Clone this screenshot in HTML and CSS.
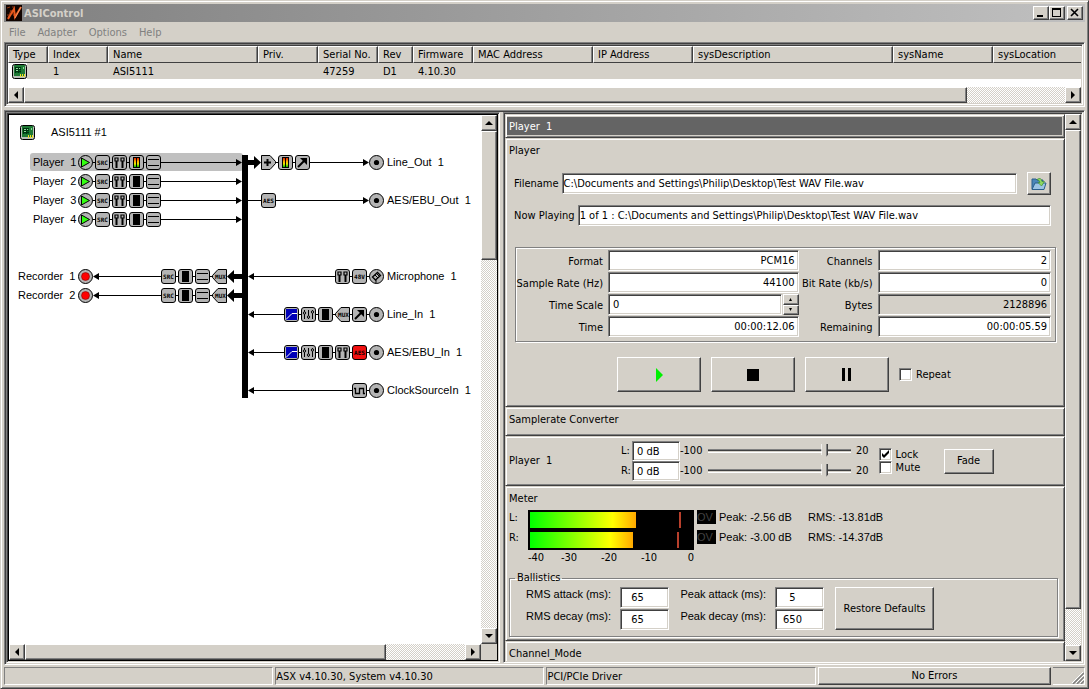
FILE: index.html
```
<!DOCTYPE html>
<html lang="en">
<head>
<meta charset="utf-8">
<title>ASIControl</title>
<link rel="stylesheet" href="styles.css">
</head>
<body>
<svg class="defs" width="0" height="0" aria-hidden="true">
  <defs>
    <linearGradient id="level" x1="0" y1="0" x2="0" y2="1">
      <stop offset="0" stop-color="#e02000"/><stop offset=".4" stop-color="#ffb000"/>
      <stop offset=".65" stop-color="#e8e800"/><stop offset="1" stop-color="#00c000"/>
    </linearGradient>
    <symbol id="card" viewBox="0 0 15 15">
      <rect x=".5" y=".5" width="14" height="14" rx="2" fill="#b8c0b8" stroke="#000"/>
      <rect x="2" y="1" width="11" height="11" fill="#1f7a35"/>
      <path d="M3 3h6v6H3z" fill="#062"/><path d="M3 3.5h6M3 5.5h6M3 7.500h6M3.500 3v6M6.500 3v6" stroke="#031"/>
      <path d="M4 4h2v1H4zM7 4h1v1H7zM4 6h2v1H4zM11 3h1v2h-1z" fill="#8fdc9a"/>
      <path d="M8 10h1v3H8zM10 10h1v3h-1zM12 10h1v3h-1z" fill="#f0e020"/>
    </symbol>
    <symbol id="box" viewBox="0 0 15 15"><rect x=".5" y=".5" width="14" height="14" rx="2.500" fill="#b4b4b4" stroke="#000"/></symbol>
    <symbol id="disc" viewBox="0 0 15 15"><circle cx="7.500" cy="7.500" r="7" fill="#b4b4b4" stroke="#000"/></symbol>
    <symbol id="play" viewBox="0 0 15 15"><use href="#disc"/><path d="M3.500 3v9L11.500 7.500z" fill="#3f1" stroke="#000"/></symbol>
    <symbol id="rec" viewBox="0 0 15 15"><use href="#disc"/><circle cx="7.500" cy="7.500" r="4" fill="#f00" stroke="#600" stroke-width=".5"/></symbol>
    <symbol id="jack" viewBox="0 0 15 15"><use href="#disc"/><circle cx="7.500" cy="7.500" r="2.600"/></symbol>
    <symbol id="mic" viewBox="0 0 15 15"><use href="#disc"/><path d="M3.500 8l5-4.500 3 3-5 4.500z" fill="#b4b4b4" stroke="#000" stroke-width="1.300"/><path d="M6 6l3 3M7 11v3.500M8 5l2.500 2.500" stroke="#000"/></symbol>
    <symbol id="src" viewBox="0 0 15 15"><use href="#box"/><text class="tiny" x="7.500" y="10">SRC</text></symbol>
    <symbol id="aes" viewBox="0 0 15 15"><use href="#box"/><text class="tiny" x="7.500" y="10">AES</text></symbol>
    <symbol id="aesred" viewBox="0 0 15 15"><rect x=".5" y=".5" width="14" height="14" rx="2.500" fill="#f01010" stroke="#000"/><text class="tiny" x="7.500" y="10">AES</text></symbol>
    <symbol id="phantom" viewBox="0 0 15 15"><use href="#box"/><text class="tiny" x="7.500" y="10">48V</text></symbol>
    <symbol id="mux" viewBox="0 0 15 15"><path d="M6 .5h8.500v14H6L.5 8.500v-2z" fill="#b4b4b4" stroke="#000"/><text class="tiny" x="8.500" y="10">MUX</text></symbol>
    <symbol id="fader" viewBox="0 0 15 15"><use href="#box"/><path d="M4.500 5v8M10.500 5v8" stroke="#000" stroke-width="2"/><path d="M3 3h3v3H3zM9 3h3v3H9z" fill="#b4b4b4" stroke="#000" stroke-width="1.200"/></symbol>
    <symbol id="eq" viewBox="0 0 15 15"><use href="#box"/><path d="M3.500 3v9M7.500 3v9M11.500 3v9" stroke="#000"/><g fill="#b4b4b4" stroke="#000"><circle cx="3.500" cy="6" r="1.200"/><circle cx="7.500" cy="10" r="1.200"/><circle cx="11.500" cy="5" r="1.200"/></g></symbol>
    <symbol id="meteroff" viewBox="0 0 15 15"><use href="#box"/><path d="M4 2h7v11H4z"/></symbol>
    <symbol id="meteron" viewBox="0 0 15 15"><use href="#box"/><path d="M4 2h7v11H4z"/><path d="M5 3h2v9H5zM8 3h2v9H8z" fill="url(#level)"/></symbol>
    <symbol id="mode" viewBox="0 0 15 15"><use href="#box"/><path d="M2 4.500h11M2 10.500h11" stroke="#000"/></symbol>
    <symbol id="plus" viewBox="0 0 15 15"><path d="M.5.5H9L14.500 6.500v2L9 14.500H.5z" fill="#b4b4b4" stroke="#000"/><path d="M3 7.500h7M6.500 4v7" stroke="#000" stroke-width="2"/></symbol>
    <symbol id="trim" viewBox="0 0 15 15"><use href="#box"/><path d="M3 12l7-7" stroke="#000" stroke-width="2"/><path d="M5 3h7v7z"/></symbol>
    <symbol id="curve" viewBox="0 0 15 15"><rect x=".5" y=".5" width="14" height="14" rx="2.500" fill="#b4b4b4" stroke="#000"/><path d="M2 2h11v11H2z" fill="#0000b8"/><path d="M2 12.500l6-6h5" fill="none" stroke="#fff"/></symbol>
    <symbol id="wave" viewBox="0 0 15 15"><use href="#box"/><path d="M2 5.500h1.500v5h4v-5h4v5H13" fill="none" stroke="#000" stroke-width="1.300"/></symbol>
  </defs>
</svg>

<div class="window">
  <header class="titlebar">
    <svg class="logo" width="16" height="16" viewBox="0 0 16 16" aria-hidden="true">
      <rect width="16" height="16" fill="#100400"/><path d="M1 3l3-1M6 2h3M2 13l3-8 3 6M1 10l3 0" stroke="#8a3410" fill="none"/>
      <path d="M2 14L8 4l1 8 6-10" fill="none" stroke="#e8581c" stroke-width="2"/>
      <path d="M9 13l6-11" stroke="#ffb080" stroke-width=".7"/>
    </svg>
    <h1>ASIControl</h1>
    <div class="caption">
      <button class="raised" aria-label="Minimize"><svg width="12" height="10"><path d="M2 7h6v2H2z"/></svg></button>
      <button class="raised" aria-label="Maximize"><svg width="12" height="10"><path d="M1 0h9v9H1zM2 2v6h7V2z" fill-rule="evenodd"/></svg></button>
      <button class="raised close" aria-label="Close"><svg width="12" height="10"><path d="M2 1l7 7M9 1L2 8" stroke="#000" stroke-width="1.600"/></svg></button>
    </div>
  </header>

  <nav class="menu">
    <button>File</button><button>Adapter</button><button>Options</button><button>Help</button>
  </nav>

  <section class="sunk"><div class="sunk adapters">
    <div class="rows">
      <table>
        <colgroup><col class="w40"><col class="w60"><col class="w150"><col class="w60"><col class="w60"><col class="w35"><col class="w60"><col class="w120"><col class="w100"><col class="w200"><col class="w100"><col class="w150"></colgroup>
        <thead><tr><th>Type</th><th>Index</th><th>Name</th><th>Priv.</th><th>Serial No.</th><th>Rev</th><th>Firmware</th><th>MAC Address</th><th>IP Address</th><th>sysDescription</th><th>sysName</th><th>sysLocation</th></tr></thead>
        <tbody><tr><td class="type"><svg width="15" height="15"><use href="#card"/></svg></td><td>1</td><td>ASI5111</td><td></td><td>47259</td><td>D1</td><td>4.10.30</td><td></td><td></td><td></td><td></td><td></td></tr></tbody>
      </table>
    </div>
    <div class="hscroll">
      <button class="raised arrow" aria-label="Scroll left"><svg width="12" height="12"><path d="M8 2v8L4 6z"/></svg></button>
      <div class="track"><div class="raised thumb long"></div></div>
      <button class="raised arrow" aria-label="Scroll right"><svg width="12" height="12"><path d="M4 2v8l4-4z"/></svg></button>
    </div>
  </div></section>

  <main class="sunk split">
    <section class="sunk left"><div class="topology">
      <div class="canvas">
        <svg width="472" height="529" viewBox="9 115 472 529" role="img" aria-label="Adapter topology">
          <rect x="30" y="153" width="213" height="18" rx="3" fill="#c0c0c0"/>
          <g stroke="#000">
            <path d="M86 162.500h152M86 181.500h152M86 200.500h152M86 219.500h152"/>
            <path d="M98 276.500h120M98 295.500h120"/>
            <path d="M270 162.500h95M248 200.500h117M253 276.500h120M253 314.500h120M253 352.500h120M253 390.500h120"/>
          </g>
          <path d="M242 155h6v243h-6z"/>
          <path d="M236 159v7l6-3.500zM236 178v7l6-3.500zM236 197v7l6-3.500zM236 216v7l6-3.500z"/>
          <path d="M99 273v7l-6-3.500zM99 292v7l-6-3.500z"/>
          <path d="M363 159v7l6-3.500zM363 197v7l6-3.500z"/>
          <path d="M254 273v7l-6-3.500zM254 311v7l-6-3.500zM254 349v7l-6-3.500zM254 387v7l-6-3.500z"/>
          <path d="M248 160h6v-4l7 6.500-7 6.500v-4h-6z"/>
          <path d="M242 274h-8v-4l-7 6.500 7 6.500v-4h8zM242 293h-8v-4l-7 6.500 7 6.500v-4h8z"/>

          <use href="#card" x="20" y="125" width="15" height="15"/>
          <text x="51" y="136">ASI5111 #1</text>

          <text x="33" y="166">Player&#160; 1</text>
          <g><use href="#play" x="78" y="155" width="15" height="15"/><use href="#src" x="95" y="155" width="15" height="15"/><use href="#fader" x="112" y="155" width="15" height="15"/><use href="#meteron" x="129" y="155" width="15" height="15"/><use href="#mode" x="146" y="155" width="15" height="15"/></g>
          <text x="33" y="185">Player&#160; 2</text>
          <g><use href="#play" x="78" y="174" width="15" height="15"/><use href="#src" x="95" y="174" width="15" height="15"/><use href="#fader" x="112" y="174" width="15" height="15"/><use href="#meteroff" x="129" y="174" width="15" height="15"/><use href="#mode" x="146" y="174" width="15" height="15"/></g>
          <text x="33" y="204">Player&#160; 3</text>
          <g><use href="#play" x="78" y="193" width="15" height="15"/><use href="#src" x="95" y="193" width="15" height="15"/><use href="#fader" x="112" y="193" width="15" height="15"/><use href="#meteroff" x="129" y="193" width="15" height="15"/><use href="#mode" x="146" y="193" width="15" height="15"/></g>
          <text x="33" y="223">Player&#160; 4</text>
          <g><use href="#play" x="78" y="212" width="15" height="15"/><use href="#src" x="95" y="212" width="15" height="15"/><use href="#fader" x="112" y="212" width="15" height="15"/><use href="#meteroff" x="129" y="212" width="15" height="15"/><use href="#mode" x="146" y="212" width="15" height="15"/></g>

          <text x="18" y="280">Recorder&#160; 1</text>
          <g><use href="#rec" x="78" y="269" width="15" height="15"/><use href="#src" x="161" y="269" width="15" height="15"/><use href="#meteroff" x="178" y="269" width="15" height="15"/><use href="#mode" x="195" y="269" width="15" height="15"/><use href="#mux" x="212" y="269" width="15" height="15"/></g>
          <text x="18" y="299">Recorder&#160; 2</text>
          <g><use href="#rec" x="78" y="288" width="15" height="15"/><use href="#src" x="161" y="288" width="15" height="15"/><use href="#meteroff" x="178" y="288" width="15" height="15"/><use href="#mode" x="195" y="288" width="15" height="15"/><use href="#mux" x="212" y="288" width="15" height="15"/></g>

          <g><use href="#plus" x="261" y="155" width="15" height="15"/><use href="#meteron" x="278" y="155" width="15" height="15"/><use href="#trim" x="295" y="155" width="15" height="15"/><use href="#jack" x="369" y="155" width="15" height="15"/></g>
          <text x="387" y="166">Line_Out&#160; 1</text>
          <g><use href="#aes" x="261" y="193" width="15" height="15"/><use href="#jack" x="369" y="193" width="15" height="15"/></g>
          <text x="387" y="204">AES/EBU_Out&#160; 1</text>
          <g><use href="#fader" x="335" y="269" width="15" height="15"/><use href="#phantom" x="352" y="269" width="15" height="15"/><use href="#mic" x="369" y="269" width="15" height="15"/></g>
          <text x="387" y="280">Microphone&#160; 1</text>
          <g><use href="#curve" x="284" y="307" width="15" height="15"/><use href="#eq" x="301" y="307" width="15" height="15"/><use href="#meteroff" x="318" y="307" width="15" height="15"/><use href="#mux" x="335" y="307" width="15" height="15"/><use href="#trim" x="352" y="307" width="15" height="15"/><use href="#jack" x="369" y="307" width="15" height="15"/></g>
          <text x="387" y="318">Line_In&#160; 1</text>
          <g><use href="#curve" x="284" y="345" width="15" height="15"/><use href="#eq" x="301" y="345" width="15" height="15"/><use href="#meteroff" x="318" y="345" width="15" height="15"/><use href="#fader" x="335" y="345" width="15" height="15"/><use href="#aesred" x="352" y="345" width="15" height="15"/><use href="#jack" x="369" y="345" width="15" height="15"/></g>
          <text x="387" y="356">AES/EBU_In&#160; 1</text>
          <g><use href="#wave" x="352" y="383" width="15" height="15"/><use href="#jack" x="369" y="383" width="15" height="15"/></g>
          <text x="387" y="394">ClockSourceIn&#160; 1</text>
        </svg>
      </div>
      <div class="vscroll">
        <button class="raised arrow" aria-label="Scroll up"><svg width="12" height="12"><path d="M2 8h8L6 4z"/></svg></button>
        <div class="track"><div class="raised thumb short"></div></div>
        <button class="raised arrow" aria-label="Scroll down"><svg width="12" height="12"><path d="M2 4h8L6 8z"/></svg></button>
      </div>
      <div class="hscroll">
        <button class="raised arrow" aria-label="Scroll left"><svg width="12" height="12"><path d="M8 2v8L4 6z"/></svg></button>
        <div class="track"><div class="raised thumb medium"></div></div>
        <button class="raised arrow" aria-label="Scroll right"><svg width="12" height="12"><path d="M4 2v8l4-4z"/></svg></button>
      </div>
      <div class="corner"></div>
    </div></section>

    <section class="sunk right">
      <div class="panels">
        <div class="raised panel heading"><h2>Player&#160; 1</h2></div>

        <div class="raised panel player">
          <h3>Player</h3>
          <div class="line file"><label for="file">Filename</label><input id="file" class="sunk" value="C:\Documents and Settings\Philip\Desktop\Test WAV File.wav">
            <button class="raised open" aria-label="Open file"><svg width="16" height="14" viewBox="0 0 16 14"><path d="M1 12V2h4l1 1h6v3" fill="#4a86b8" stroke="#2b5f8c"/><path d="M1 12.500L4 6h11l-2 6.500z" fill="#9cc4e4" stroke="#2b5f8c"/><path d="M6 2.500q4-3 5 2h2.500L10.500 9 7 5.500h2Q8.500 3 6 2.500z" fill="#8fd860" stroke="#3d8f3a" stroke-width=".7"/></svg></button></div>
          <div class="line now"><label for="now">Now Playing</label><input id="now" class="sunk" readonly value="1 of 1 : C:\Documents and Settings\Philip\Desktop\Test WAV File.wav"></div>
          <div class="info etched">
            <label for="fmt">Format</label><input id="fmt" class="sunk num" readonly value="PCM16">
            <label for="chn">Channels</label><input id="chn" class="sunk num" readonly value="2">
            <label for="rate">Sample Rate (Hz)</label><input id="rate" class="sunk num" readonly value="44100">
            <label for="bit">Bit Rate (kb/s)</label><input id="bit" class="sunk num" readonly value="0">
            <label for="scale">Time Scale</label>
            <div class="spin"><input id="scale" class="sunk" value="0"><div class="steps"><button class="raised" aria-label="Increase"><svg width="5" height="3"><path d="M1 3h3L2.500 0z"/></svg></button><button class="raised" aria-label="Decrease"><svg width="5" height="3"><path d="M1 0h3L2.500 3z"/></svg></button></div></div>
            <label for="byt">Bytes</label><input id="byt" class="sunk num off" readonly value="2128896">
            <label for="tim">Time</label><input id="tim" class="sunk num" readonly value="00:00:12.06">
            <label for="rem">Remaining</label><input id="rem" class="sunk num" readonly value="00:00:05.59">
          </div>
          <div class="transport">
            <button class="raised" aria-label="Play"><svg width="14" height="14"><path d="M4 0l7 7-7 7z" fill="#00f000"/></svg></button>
            <button class="raised" aria-label="Stop"><svg width="12" height="12"><path d="M0 0h12v12H0z"/></svg></button>
            <button class="raised" aria-label="Pause"><svg width="10" height="13"><path d="M0 0h3v13H0zM6 0h3v13H6z"/></svg></button>
            <label class="tick"><input type="checkbox" class="sunk">Repeat</label>
          </div>
        </div>

        <div class="raised panel srconv"><h3>Samplerate Converter</h3></div>

        <div class="raised panel volume">
          <h3>Player&#160; 1</h3>
          <div class="gains">
            <label for="gl">L:</label><input id="gl" class="sunk" value="0 dB"><span>-100</span><input type="range" min="-100" max="20" value="0" aria-label="Left level"><span class="max">20</span>
            <label for="gr">R:</label><input id="gr" class="sunk" value="0 dB"><span>-100</span><input type="range" min="-100" max="20" value="0" aria-label="Right level"><span class="max">20</span>
          </div>
          <div class="ticks"><label class="tick"><input type="checkbox" class="sunk" checked>Lock</label><label class="tick"><input type="checkbox" class="sunk">Mute</label></div>
          <button class="raised fade">Fade</button>
        </div>

        <div class="raised panel meter">
          <h3>Meter</h3>
          <div class="levels">
            <div class="names"><span>L:</span><span>R:</span></div>
            <div class="scope">
              <div class="bars">
                <div class="lane"><div class="bar" style="width:65.4%"></div><div class="peak" style="left:92%"></div></div>
                <div class="lane"><div class="bar" style="width:63.6%"></div><div class="peak" style="left:91%"></div></div>
              </div>
              <div class="scale"><span>-40</span><span>-30</span><span>-20</span><span>-10</span><span>0</span></div>
            </div>
            <div class="values">
              <span class="ov">OV</span><span>Peak: -2.56 dB</span><span>RMS: -13.81dB</span>
              <span class="ov">OV</span><span>Peak: -3.00 dB</span><span>RMS: -14.37dB</span>
            </div>
          </div>
          <fieldset class="etched">
            <legend>Ballistics</legend>
            <div class="ballistics">
              <label for="ra">RMS attack (ms):</label><input id="ra" class="sunk" value="65">
              <label for="pa">Peak attack (ms):</label><input id="pa" class="sunk" value="5">
              <button class="raised restore">Restore Defaults</button>
              <label for="rd">RMS decay (ms):</label><input id="rd" class="sunk" value="65">
              <label for="pd">Peak decay (ms):</label><input id="pd" class="sunk" value="650">
            </div>
          </fieldset>
        </div>

        <div class="raised panel channel"><h3>Channel_Mode</h3></div>
      </div>
      <div class="vscroll">
        <button class="raised arrow" aria-label="Scroll up"><svg width="12" height="12"><path d="M2 8h8L6 4z"/></svg></button>
        <div class="track"><div class="raised thumb tall"></div></div>
        <button class="raised arrow" aria-label="Scroll down"><svg width="12" height="12"><path d="M2 4h8L6 8z"/></svg></button>
      </div>
    </section>
  </main>

  <footer class="status">
    <div class="cell"></div><div class="cell">ASX v4.10.30, System v4.10.30</div><div class="cell">PCI/PCIe Driver</div>
    <button class="raised">No Errors</button>
    <div class="cell grip"><svg width="12" height="12"><path d="M1 12L12 1M5 12l7-7M9 12l3-3" stroke="#808080" stroke-width="1.500"/><path d="M0 11L11 0M4 11l8-8M8 11l4-4" stroke="#fff"/></svg></div>
  </footer>
</div>
</body>
</html>
```
FILE: styles.css
```
:root { --face: #d4d0c8; --shade: #808080; --dark: #404040; }
* { box-sizing: border-box; }
body { margin: 0; font: 11px/16px "DejaVu Sans Condensed", "DejaVu Sans", sans-serif; color: #000; background: var(--face); }
button, input { font: inherit; color: inherit; margin: 0; }
h1, h2, h3 { margin: 0; font-size: 11px; line-height: 16px; font-weight: normal; }
svg { display: block; }
.defs { position: absolute; }

.raised { background: var(--face); border: 1px solid; border-color: #fff var(--dark) var(--dark) #fff; box-shadow: inset -1px -1px var(--shade); padding: 0; border-radius: 0; }
.sunk { border: 1px solid; border-color: var(--shade) #fff #fff var(--shade); border-radius: 0; padding: 1px; box-shadow: inset 1px 1px var(--dark), inset -1px -1px var(--face); }
button.raised { display: flex; align-items: center; justify-content: center; }

.window { height: 100vh; min-height: 680px; display: flex; flex-direction: column; padding: 3px 3px 2px 3px; border: 1px solid; border-color: var(--face) var(--dark) var(--dark) var(--face); box-shadow: inset 1px 1px #fff, inset -1px -1px var(--shade); }

.titlebar { display: flex; align-items: center; height: 18px; padding: 0 2px; gap: 2px; background: linear-gradient(to right, #808080, #c0c0c0); }
.titlebar h1 { flex: 1; padding-top: 2px; font-weight: bold; color: var(--face); }
.caption { display: flex; }
.caption button { width: 16px; height: 14px; }
.caption .close { margin-left: 2px; }

.menu { display: flex; height: 20px; align-items: center; padding: 2px 0 0 5px; gap: 12px; }
.menu button { border: 0; padding: 0; background: none; color: #808080; }

.adapters { padding: 1px; }
.rows { height: 41px; overflow: hidden; background: #fff; }
table { table-layout: fixed; width: 1135px; border-collapse: separate; border-spacing: 0; }
.w35 { width: 35px; } .w40 { width: 40px; } .w60 { width: 60px; } .w100 { width: 100px; }
.w120 { width: 120px; } .w150 { width: 150px; } .w200 { width: 200px; }
th, td { padding: 1px 0 0 4px; height: 17px; line-height: 14px; text-align: left; font-weight: normal; white-space: nowrap; overflow: hidden; background: var(--face); }
th { border: 1px solid; border-color: #fff var(--dark) var(--dark) #fff; box-shadow: inset -1px 0 var(--shade); }
td { height: 16px; padding-left: 5px; }
td.type { padding: 0 0 0 4px; background: linear-gradient(to right, #fff 19px, var(--face) 19px); }

.hscroll, .vscroll { display: flex; }
.hscroll { height: 16px; }
.vscroll { flex-direction: column; width: 16px; }
.arrow { width: 16px; height: 16px; flex: none; }
.track { flex: 1; min-width: 0; min-height: 0; background: repeating-conic-gradient(#fff 0 25%, #d4d0c8 0 50%) 0 0 / 2px 2px; }
.hscroll .thumb { height: 100%; }
.thumb.long { width: 90.600%; }
.thumb.medium { width: 82%; }
.thumb.short { height: 26%; }
.thumb.tall { height: 93%; }

.split { flex: 1; min-height: 0; margin-top: 3px; display: grid; grid-template-columns: 494fr 580fr; grid-template-rows: minmax(0, 1fr); gap: 3px; }
.left, .right { min-width: 0; min-height: 0; display: flex; }
.topology { flex: 1; min-width: 0; border: 1px solid #000; display: grid; grid-template: minmax(0, 1fr) 16px / minmax(0, 1fr) 16px; background: #fff; }
.canvas { overflow: hidden; }
.canvas text { font: 11px "Liberation Sans", Arial, sans-serif; }
.tiny { font: bold 6px "DejaVu Sans Mono", monospace !important; text-anchor: middle; }
.corner { background: var(--face); }

.panels { flex: 1; min-width: 0; overflow: hidden; display: flex; flex-direction: column; }
.panel { flex: none; border-color: var(--face) var(--dark) var(--dark) var(--face); box-shadow: inset 1px 1px #fff, inset -1px -1px var(--shade); }
.heading { height: 24px; padding: 2px 2px 3px 1px; }
.heading h2 { background: #646464; color: #fff; height: 18px; padding: 2px 2px; }
.player { height: 269px; padding: 4px 8px 0 3px; }
.line { display: flex; align-items: center; height: 23px; padding: 0 5px; }
.line label { padding-top: 1px; }
.line input, .info input { height: 21px; flex: 1; min-width: 0; background: #fff; }
.file { margin-top: 13px; gap: 3px; }
.file .open { width: 24px; height: 23px; margin-left: 7px; }
.now { margin-top: 9px; gap: 3px; }
.etched { border: 1px solid var(--shade); box-shadow: inset 1px 1px #fff, 1px 1px #fff; }
.info { margin: 20px 0 0 6px; padding: 2px 4px 4px 1px; display: grid; grid-template-columns: 86px 190fr 69px 173fr; column-gap: 5px; row-gap: 1px; align-items: center; }
.info label { justify-self: end; white-space: nowrap; padding-top: 2px; height: 21px; line-height: 20px; }
.info .num { width: 100%; text-align: right; padding-right: 3px; }
.info .off { background: var(--face); }
.spin { display: flex; height: 21px; gap: 1px; min-width: 0; }
.spin .sunk { padding-left: 4px; }
.steps { display: flex; flex-direction: column; width: 16px; }
.steps button { height: 11px; }
.transport { display: flex; gap: 10px; margin: 15px 0 0 108px; align-items: center; }
.transport button { width: 84px; height: 35px; }
.tick { display: flex; align-items: center; gap: 4px; }
.tick input { appearance: none; width: 13px; height: 13px; background: #fff; }
.tick input:checked { background: #fff url("data:image/svg+xml,%3Csvg xmlns='http://www.w3.org/2000/svg' width='9' height='9'%3E%3Cpath d='M1 3v3l2 2 5-5V0L3 5z'/%3E%3C/svg%3E") center no-repeat; }

.srconv { height: 29px; padding: 4px 3px; }
.volume { height: 50px; padding-left: 3px; display: flex; align-items: center; }
.volume h3 { width: 112px; }
.gains { display: grid; grid-template-columns: 11px 48px 28px 143px auto; grid-auto-rows: 20px; align-items: center; }
.gains .sunk { height: 20px; width: 48px; padding-left: 4px; background: #fff; }
.gains .max { padding-left: 5px; }
.gains input[type=range] { appearance: none; width: 143px; height: 14px; background: linear-gradient(var(--shade) 1px, var(--dark) 1px 2px, var(--face) 2px 3px, #fff 3px) 0 5px / 100% 4px no-repeat; }
.gains input[type=range]::-webkit-slider-thumb { appearance: none; width: 7px; height: 14px; clip-path: polygon(0 0, 100% 0, 100% 75%, 50% 100%, 0 75%); background: linear-gradient(to right, #fff 1px, var(--face) 1px 5px, var(--shade) 5px 6px, var(--dark) 6px); }
.ticks { margin-left: 10px; width: 43px; }
.ticks .tick { height: 13px; }
.fade { width: 50px; height: 25px; margin-left: 22px; }

.meter { height: 155px; padding: 4px 5px 0 3px; }
.levels { display: flex; margin-top: 3px; }
.names { width: 19px; }
.names span { display: block; height: 20px; }
.scope { width: 166px; }
.bars { background: #000; padding: 2px; display: grid; gap: 4px; }
.lane { height: 16px; position: relative; }
.bar { height: 16px; background: linear-gradient(to right, #0f0, #ff0 78%, #ffa800); }
.peak { position: absolute; top: 0; width: 2px; height: 16px; background: #b8402c; }
.scale { display: grid; grid-template-columns: 21fr 40fr 40fr 40fr 25fr; text-align: center; }
.scale span:first-child { text-align: left; }
.scale span:last-child { text-align: right; }
.values { display: grid; grid-template-columns: 19px 86px auto; grid-auto-rows: 20px; column-gap: 3px; margin-left: 3px; line-height: 14px; font-family: "Liberation Sans", Arial, sans-serif; }
.ov { background: #000; color: #404040; height: 14px; }
fieldset { margin: 5px 1px 0 0; padding: 0 0 4px 18px; min-width: 0; height: 66px; box-shadow: none; }
legend { padding: 0 2px; margin-left: -13px; line-height: 14px; }
.ballistics { display: grid; grid-template-columns: 83px 49px 88px 49px 101px; grid-template-rows: 21px 21px; column-gap: 9px; row-gap: 1px; padding-top: 2px; justify-content: start; }
.ballistics label { justify-self: end; white-space: nowrap; line-height: 14px; font-family: "Liberation Sans", Arial, sans-serif; }
.ballistics input { width: 49px; padding-right: 15px; text-align: center; background: #fff; }
.restore { grid-row: span 2; grid-column: 5; margin-left: 2px; white-space: nowrap; }
.channel { padding: 4px 3px; height: 30px; }

.status { display: grid; grid-template-columns: 270fr 270fr 270fr 234fr 32fr; gap: 2px; height: 18px; margin-top: 2px; margin-bottom: 1px; }
.cell { border: 1px solid; border-color: var(--shade) #fff #fff var(--shade); padding-top: 1px; white-space: nowrap; overflow: hidden; }
.grip { border-left: 0; display: flex; justify-content: flex-end; align-items: flex-end; }
```
